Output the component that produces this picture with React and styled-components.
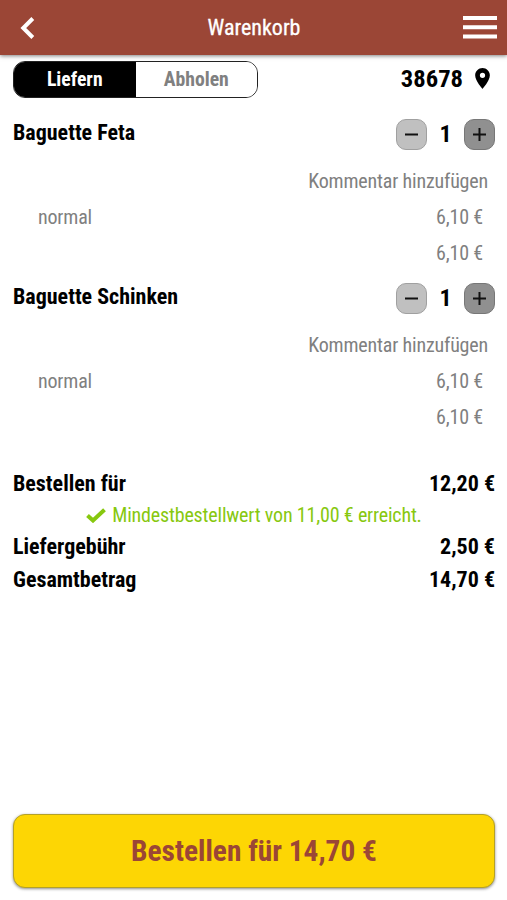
import React from "react";
import styled, { createGlobalStyle } from "styled-components";

const GlobalStyle = createGlobalStyle`
  * {
    box-sizing: border-box;
  }

  body {
    margin: 0;
    background: #fff;
    color: #000;
    font-family: "Roboto Condensed", Roboto, sans-serif;
    font-stretch: 75%;
  }

  button {
    padding: 0;
    font-family: inherit;
    font-stretch: inherit;
  }
`;

const Page = styled.div`
  display: flex;
  flex-direction: column;
  height: 100vh;
`;

const Header = styled.header`
  display: flex;
  align-items: center;
  justify-content: space-between;
  flex: none;
  height: 55px;
  padding: 0 10px 0 20px;
  background: #9b4636;
  color: #fff;
  box-shadow: 0 1px 4px rgba(0, 0, 0, 0.5);
`;

const Title = styled.h1`
  margin: 0 0 0 10px;
  font-size: 22px;
  font-weight: 400;
  line-height: 55px;
  -webkit-text-stroke: 0.3px currentColor;
`;

const Content = styled.main`
  flex: 1;
  padding: 6px 12px 0 13px;
`;

const TopRow = styled.div`
  display: flex;
  align-items: center;
  justify-content: space-between;
  height: 37px;
  margin-bottom: 18px;
`;

const Toggle = styled.div`
  display: flex;
  width: 245px;
  height: 37px;
  overflow: hidden;
  border: 1px solid #222;
  border-radius: 12px;
`;

const ToggleOption = styled.button`
  width: 50%;
  border: 0;
  background: ${(props) => (props.$active ? "#000" : "#fff")};
  color: ${(props) => (props.$active ? "#fff" : "#808080")};
  font-size: 19.7px;
  font-weight: 700;
`;

const Location = styled.div`
  display: flex;
  align-items: center;
  gap: 12px;
  padding-right: 5px;
  font-size: 24.6px;
  font-weight: 700;
  line-height: 28px;

  span,
  svg {
    margin-bottom: 2px;
  }
`;

const Item = styled.section`
  height: 164px;
`;

const ItemHead = styled.div`
  display: flex;
  align-items: center;
  justify-content: space-between;
  height: 37px;
  margin-bottom: 10px;
`;

const ItemName = styled.div`
  padding-bottom: 5px;
  font-size: 22px;
  font-weight: 700;
`;

const Stepper = styled.div`
  display: flex;
  align-items: center;
  justify-content: space-between;
  width: 99px;
  font-size: 24px;
  font-weight: 700;

  span {
    padding-bottom: 2px;
  }
`;

const StepButton = styled.button`
  display: flex;
  align-items: center;
  justify-content: center;
  width: 31px;
  height: 31px;
  border: 1px solid ${(props) => (props.$dark ? "#777" : "#a0a0a0")};
  border-radius: 10px;
  background: ${(props) => (props.$dark ? "#909090" : "#c0c0c0")};
`;

const DetailRow = styled.div`
  display: flex;
  align-items: center;
  justify-content: ${(props) => (props.$end ? "flex-end" : "space-between")};
  height: 36px;
  padding: 0 12px 0 25px;
  color: #808080;
  font-size: 20px;
  letter-spacing: -0.18px;
`;

const CommentRow = styled(DetailRow)`
  justify-content: flex-end;
  padding-right: 7px;
`;

const Totals = styled.section`
  margin-top: 23px;
`;

const TotalRow = styled.div`
  display: flex;
  align-items: center;
  justify-content: space-between;
  height: 33px;
  font-size: 22px;
  font-weight: 700;
`;

const MinimumOrder = styled.div`
  display: flex;
  align-items: center;
  justify-content: center;
  gap: 6px;
  height: 30px;
  color: #87c80f;
  font-size: 20px;
  letter-spacing: -0.18px;
`;

const OrderButton = styled.button`
  flex: none;
  height: 74px;
  margin: 0 12px 12px 13px;
  border: 1px solid #b4a128;
  border-radius: 12px;
  background: #fdd604;
  color: #9b4636;
  font-size: 29.4px;
  font-weight: 700;
  box-shadow: 0 1px 3px rgba(0, 0, 0, 0.45);
`;

const items = [
  { name: "Baguette Feta", size: "normal", price: "6,10 €" },
  { name: "Baguette Schinken", size: "normal", price: "6,10 €" },
];

const CartItem = ({ item }) => (
  <Item>
    <ItemHead>
      <ItemName>{item.name}</ItemName>
      <Stepper>
        <StepButton aria-label="weniger">
          <svg width="15" height="15" viewBox="0 0 15 15" stroke="#111" strokeWidth="2">
            <path d="M1 7.5h13" />
          </svg>
        </StepButton>
        <span>1</span>
        <StepButton $dark aria-label="mehr">
          <svg width="15" height="15" viewBox="0 0 15 15" stroke="#111" strokeWidth="2">
            <path d="M1 7.5h13M7.5 1v13" />
          </svg>
        </StepButton>
      </Stepper>
    </ItemHead>
    <CommentRow>Kommentar hinzufügen</CommentRow>
    <DetailRow>
      <span>{item.size}</span>
      <span>{item.price}</span>
    </DetailRow>
    <DetailRow $end>{item.price}</DetailRow>
  </Item>
);

const App = () => (
  <Page>
    <GlobalStyle />
    <Header>
      <svg width="15" height="22" viewBox="0 0 15 22" fill="none" stroke="#fff" strokeWidth="4">
        <path d="M12.8 1.5L3.3 11l9.5 9.5" />
      </svg>
      <Title>Warenkorb</Title>
      <svg width="34" height="23" viewBox="0 0 34 23" fill="#fff">
        <path d="M0 0h34v4H0zM0 9.3h34v4H0zM0 18.6h34v4H0z" />
      </svg>
    </Header>
    <Content>
      <TopRow>
        <Toggle>
          <ToggleOption $active>Liefern</ToggleOption>
          <ToggleOption>Abholen</ToggleOption>
        </Toggle>
        <Location>
          <span>38678</span>
          <svg width="15" height="21" viewBox="5 2 14 20">
            <path d="M12 2C8.13 2 5 5.13 5 9c0 5.25 7 13 7 13s7-7.75 7-13c0-3.87-3.13-7-7-7zm0 9.5a2.5 2.5 0 0 1 0-5 2.5 2.5 0 0 1 0 5z" />
          </svg>
        </Location>
      </TopRow>
      {items.map((item) => (
        <CartItem key={item.name} item={item} />
      ))}
      <Totals>
        <TotalRow>
          <span>Bestellen für</span>
          <span>12,20 €</span>
        </TotalRow>
        <MinimumOrder>
          <svg width="20" height="15" viewBox="0 0 20 15" fill="none" stroke="#87c80f" strokeWidth="4">
            <path d="M1.5 7.5l5.5 5L18.5 1.8" />
          </svg>
          Mindestbestellwert von 11,00 € erreicht.
        </MinimumOrder>
        <TotalRow>
          <span>Liefergebühr</span>
          <span>2,50 €</span>
        </TotalRow>
        <TotalRow>
          <span>Gesamtbetrag</span>
          <span>14,70 €</span>
        </TotalRow>
      </Totals>
    </Content>
    <OrderButton>Bestellen für 14,70 €</OrderButton>
  </Page>
);

export default App;
